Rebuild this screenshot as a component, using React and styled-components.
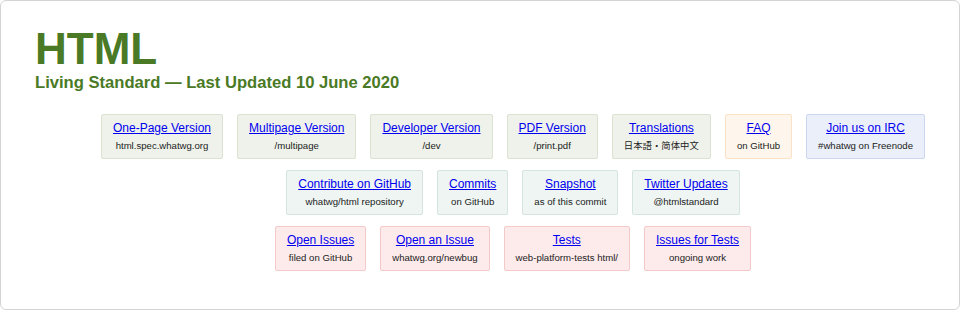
import React from "react";
import styled, {createGlobalStyle} from "styled-components";

const GlobalStyle = createGlobalStyle`
  html, body {
    margin: 0;
    padding: 0;
    background: #fff;
  }
  body {
    font-family: "Liberation Sans", Arial, sans-serif;
  }
`;

const Frame = styled.div`
  box-sizing: border-box;
  width: 960px;
  height: 310px;
  border: 1px solid #d4d4d4;
  border-radius: 6px;
  padding: 26px 0 0 34px;
`;

const Title = styled.h1`
  margin: 0;
  font-size: 44px;
  line-height: 44px;
  font-weight: bold;
  color: #4a7a25;
`;

const Subtitle = styled.h2`
  margin: 3px 0 0;
  font-size: 16.6px;
  line-height: 18px;
  font-weight: bold;
  color: #4a7a25;
`;

const Links = styled.div`
  display: flex;
  flex-direction: column;
  align-items: center;
  gap: 11px;
  margin: 22px 0 0 32px;
`;

const Row = styled.div`
  display: flex;
  gap: 14px;
`;

const palette = {
  green: {bg: "#eef2ea", border: "#d9e3cf"},
  orange: {bg: "#fef6ec", border: "#fbe2c6"},
  blue: {bg: "#ebeff9", border: "#cad7ef"},
  teal: {bg: "#eef5f2", border: "#d3e5dd"},
  red: {bg: "#fdeaea", border: "#f6c9c9"},
};

const Card = styled.div`
  box-sizing: border-box;
  height: 45px;
  padding: 5px 11px 0;
  text-align: center;
  background: ${p => palette[p.$tone].bg};
  border: 1px solid ${p => palette[p.$tone].border};
  border-radius: 2px;
`;

const CardLink = styled.a`
  display: block;
  font-size: 12px;
  line-height: 16px;
  color: #0000ee;
  text-decoration: underline;
  white-space: nowrap;
`;

const CardNote = styled.div`
  margin-top: 3px;
  font-size: ${p => (p.$cjk ? "9.4px" : "9.6px")};
  line-height: 13px;
  color: #222;
  white-space: nowrap;
  font-family: "Liberation Sans", "Noto Sans CJK JP", Arial, sans-serif;
`;

const rows = [
  [
    {tone: "green", title: "One-Page Version", note: "html.spec.whatwg.org"},
    {tone: "green", title: "Multipage Version", note: "/multipage"},
    {tone: "green", title: "Developer Version", note: "/dev"},
    {tone: "green", title: "PDF Version", note: "/print.pdf"},
    {tone: "green", title: "Translations", note: "日本語・简体中文", cjk: true},
    {tone: "orange", title: "FAQ", note: "on GitHub"},
    {tone: "blue", title: "Join us on IRC", note: "#whatwg on Freenode"},
  ],
  [
    {tone: "teal", title: "Contribute on GitHub", note: "whatwg/html repository"},
    {tone: "teal", title: "Commits", note: "on GitHub"},
    {tone: "teal", title: "Snapshot", note: "as of this commit"},
    {tone: "teal", title: "Twitter Updates", note: "@htmlstandard"},
  ],
  [
    {tone: "red", title: "Open Issues", note: "filed on GitHub"},
    {tone: "red", title: "Open an Issue", note: "whatwg.org/newbug"},
    {tone: "red", title: "Tests", note: "web-platform-tests html/"},
    {tone: "red", title: "Issues for Tests", note: "ongoing work"},
  ],
];

export default function App() {
  return (
    <>
      <GlobalStyle/>
      <Frame>
        <Title>HTML</Title>
        <Subtitle>Living Standard — Last Updated 10 June 2020</Subtitle>
        <Links>
          {rows.map((row, i) => (
            <Row key={i}>
              {row.map(item => (
                <Card key={item.title} $tone={item.tone}>
                  <CardLink href="#">{item.title}</CardLink>
                  <CardNote $cjk={item.cjk}>{item.note}</CardNote>
                </Card>
              ))}
            </Row>
          ))}
        </Links>
      </Frame>
    </>
  );
}
